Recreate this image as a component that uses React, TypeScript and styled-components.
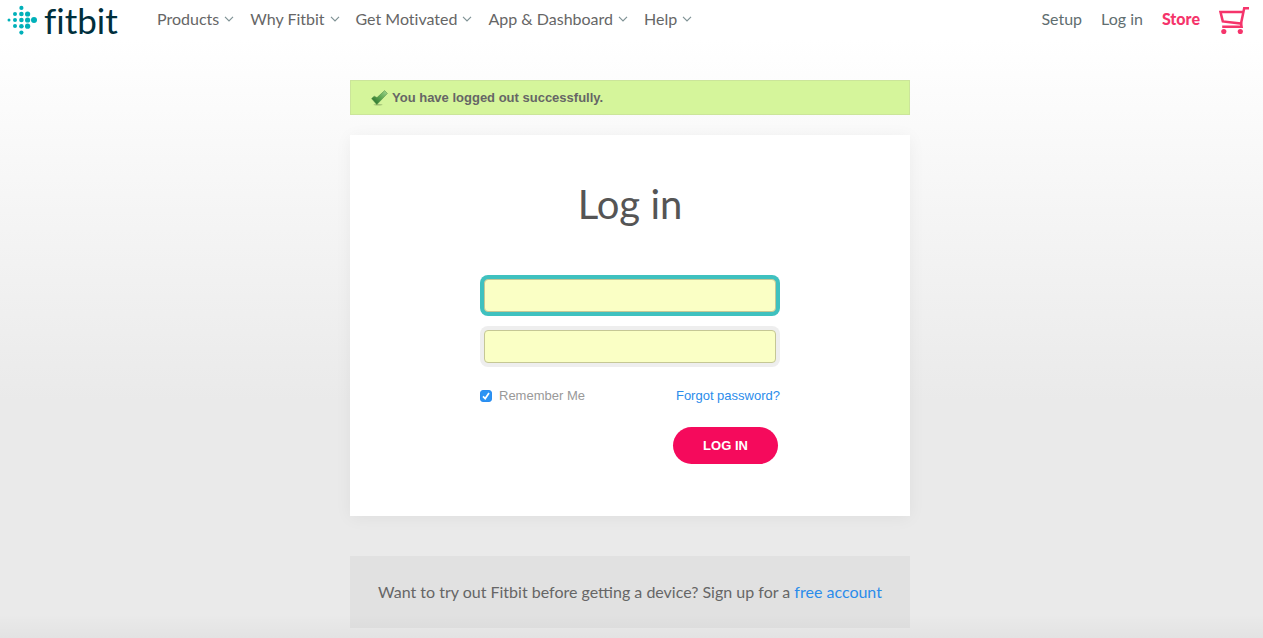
import React from "react";
import styled, { createGlobalStyle } from "styled-components";

const brandFont = `Lato, "Open Sans", sans-serif`;
const bodyFont = `"Liberation Sans", Helvetica, Arial, sans-serif`;

const GlobalStyle = createGlobalStyle`
  * { box-sizing: border-box; }
  html { min-height: 100%; background: #eaeaea; }
  body { margin: 0; font-family: ${bodyFont}; color: #666; }
`;

const Page = styled.div`
  min-height: 100vh;
  padding-bottom: 10px;
  background:
    linear-gradient(to top, rgba(0, 0, 0, 0.03), rgba(0, 0, 0, 0) 24px),
    linear-gradient(#fff 40px, #eaeaea 400px);
`;

const Header = styled.header`
  display: flex;
  align-items: center;
  height: 40px;
  padding: 0 14px 0 7px;
  font-family: ${brandFont};
  font-size: 16px;
  font-variant-ligatures: none;
  line-height: 20px;
`;

const Logo = styled.a`
  display: flex;
  align-items: center;
  gap: 7px;
  width: 150px;
  color: #002f3c;
  font-size: 35px;
  line-height: 40px;
  text-decoration: none;
`;

const Nav = styled.nav`
  display: flex;
  gap: 16px;
`;

const NavItem = styled.button`
  display: flex;
  align-items: center;
  gap: 5px;
  padding: 0 0 2px;
  border: 0;
  background: none;
  color: #666;
  font: inherit;
`;

const UserNav = styled.nav`
  display: flex;
  align-items: center;
  gap: 19px;
  margin-left: auto;
`;

const UserLink = styled.a<{ $strong?: boolean }>`
  padding-bottom: 2px;
  color: ${(p) => (p.$strong ? "#f5346b" : "#5f6e70")};
  font-weight: ${(p) => (p.$strong ? 900 : 400)};
  text-decoration: none;
`;

const CartLink = styled.a`
  display: flex;
`;

const Main = styled.main`
  max-width: 563px;
  margin: 0 auto;
  padding: 40px 3px 0 0;
`;

const Notice = styled.p`
  display: flex;
  align-items: center;
  gap: 4px;
  height: 35px;
  margin: 0 0 20px;
  padding: 0 20px;
  border: 1px solid #cbe59a;
  background: #d5f59b;
  color: #666;
  font-size: 13px;
  font-weight: 700;
`;

const Card = styled.section`
  padding: 45px 130px 52px;
  background: #fff;
  box-shadow: 0 2px 16px rgba(0, 0, 0, 0.05);
`;

const Title = styled.h1`
  margin: 0 0 47px;
  color: #555;
  font-family: ${brandFont};
  font-size: 40px;
  font-weight: 400;
  line-height: 48px;
  text-align: center;
`;

const Fields = styled.div`
  display: grid;
  gap: 18px;
  padding: 4px;
`;

const Field = styled.input<{ $active?: boolean }>`
  width: 100%;
  height: 33px;
  padding: 0 10px;
  border: 1px solid #c5c795;
  border-radius: 4px;
  outline: none;
  background: #faffc5;
  box-shadow: 0 0 0 4px ${(p) => (p.$active ? "#3fc1bf" : "#eee")};
  font-size: 14px;
`;

const Options = styled.div`
  display: flex;
  align-items: center;
  justify-content: space-between;
  margin-top: 19px;
  font-size: 13px;
  line-height: 20px;
`;

const Remember = styled.label`
  display: flex;
  align-items: center;
  gap: 7px;
  color: #999;
`;

const CheckHolder = styled.span`
  display: grid;
  width: 12px;
  height: 12px;

  > * {
    grid-area: 1 / 1;
  }
`;

const Checkbox = styled.input`
  appearance: none;
  width: 12px;
  height: 12px;
  margin: 0;
  border: 1px solid #8f8f8f;
  border-radius: 3px;
  background: #fff;

  &:checked {
    border-color: #2b8df0;
    background: #2b93f3;
  }
  &:not(:checked) + svg {
    display: none;
  }
`;

const TickMark = styled.svg`
  pointer-events: none;
`;

const Link = styled.a`
  color: #2b8ceb;
  text-decoration: none;
`;

const Submit = styled.button`
  display: block;
  width: 105px;
  height: 37px;
  margin: 21px 2px 0 auto;
  padding: 0;
  border: 0;
  border-radius: 19px;
  background: #f50a5c;
  color: #fff;
  font-family: ${bodyFont};
  font-size: 13px;
  font-weight: 700;
`;

const SignUp = styled.p`
  margin: 40px 0 0;
  padding: 26px 20px;
  background: rgba(0, 0, 0, 0.035);
  color: #666;
  font-family: ${brandFont};
  font-size: 16px;
  line-height: 20px;
  text-align: center;
`;

const dots = [
  [2, 14, 1.5],
  [8, 8, 2], [8, 14, 2], [8, 20, 2],
  [14.4, 1.9, 2.1], [14.4, 8, 2.3], [14.4, 14, 2.3], [14.4, 20.2, 2.3], [14.4, 26.6, 2.1],
  [20.6, 8, 2.6], [20.6, 14, 2.6], [20.6, 20.2, 2.6],
  [27, 14, 3],
];

const LogoMark = () => (
  <svg width="30" height="32" viewBox="0 -2 30 32" fill="#00b0b9" aria-hidden="true">
    {dots.map(([x, y, r]) => (
      <circle key={`${x}-${y}`} cx={x} cy={y} r={r} />
    ))}
  </svg>
);

const Chevron = () => (
  <svg width="10" height="6" viewBox="0 0 10 6" fill="none" stroke="#7f9295" strokeWidth="1.2" aria-hidden="true">
    <path d="M1 0.8 5 4.8 9 0.8" />
  </svg>
);

const Cart = () => (
  <svg width="30" height="28" viewBox="0 -1 30 28" fill="none" stroke="#f5346b" strokeWidth="2.5" aria-hidden="true">
    <path d="M30 1.2H25.2L22 16.6 3.8 14.4 1.5 5H24" />
    <path d="M21.9 15.5 22.6 19.8H3.2" />
    <circle cx="4.8" cy="24.5" r="2.6" fill="#f5346b" stroke="none" />
    <circle cx="21.3" cy="24.5" r="2.6" fill="#f5346b" stroke="none" />
  </svg>
);

const Tick = () => (
  <svg width="17" height="16" viewBox="0 0 17 16" aria-hidden="true">
    <defs>
      <linearGradient id="leaf" x1="1" y1="0" x2="0" y2="1">
        <stop offset="0" stopColor="#a3d890" />
        <stop offset="0.5" stopColor="#58a34d" />
        <stop offset="1" stopColor="#1f6423" />
      </linearGradient>
    </defs>
    <ellipse cx="7" cy="14.8" rx="4.5" ry="0.8" fill="#6c8a50" opacity="0.5" />
    <path d="M0.6 8.6 3.2 6.2 6 7.6 13.6 0.6 16.4 3.4 5.8 14.6Z" fill="url(#leaf)" stroke="#4a8a40" strokeWidth="0.5" />
  </svg>
);

const menus = ["Products", "Why Fitbit", "Get Motivated", "App & Dashboard", "Help"];

export default function App() {
  return (
    <Page>
      <GlobalStyle />
      <Header>
        <Logo href="#">
          <LogoMark />
          fitbit
        </Logo>
        <Nav aria-label="Main">
          {menus.map((label) => (
            <NavItem key={label} type="button">
              {label}
              <Chevron />
            </NavItem>
          ))}
        </Nav>
        <UserNav aria-label="Account">
          <UserLink href="#">Setup</UserLink>
          <UserLink href="#">Log in</UserLink>
          <UserLink href="#" $strong>Store</UserLink>
          <CartLink href="#" aria-label="Cart">
            <Cart />
          </CartLink>
        </UserNav>
      </Header>
      <Main>
        <Notice role="status">
          <Tick />
          You have logged out successfully.
        </Notice>
        <Card>
          <Title>Log in</Title>
          <form onSubmit={(e) => e.preventDefault()}>
            <Fields>
              <Field type="email" aria-label="Email" $active />
              <Field type="password" aria-label="Password" />
            </Fields>
            <Options>
              <Remember>
                <CheckHolder>
                  <Checkbox type="checkbox" defaultChecked />
                  <TickMark width="12" height="12" viewBox="0 0 12 12" fill="none" stroke="#fff" strokeWidth="1.7">
                    <path d="M3 6.3 5.2 8.6 9 3" />
                  </TickMark>
                </CheckHolder>
                Remember Me
              </Remember>
              <Link href="#">Forgot password?</Link>
            </Options>
            <Submit type="submit">LOG IN</Submit>
          </form>
        </Card>
        <SignUp>
          Want to try out Fitbit before getting a device? Sign up for a <Link href="#">free account</Link>
        </SignUp>
      </Main>
    </Page>
  );
}
